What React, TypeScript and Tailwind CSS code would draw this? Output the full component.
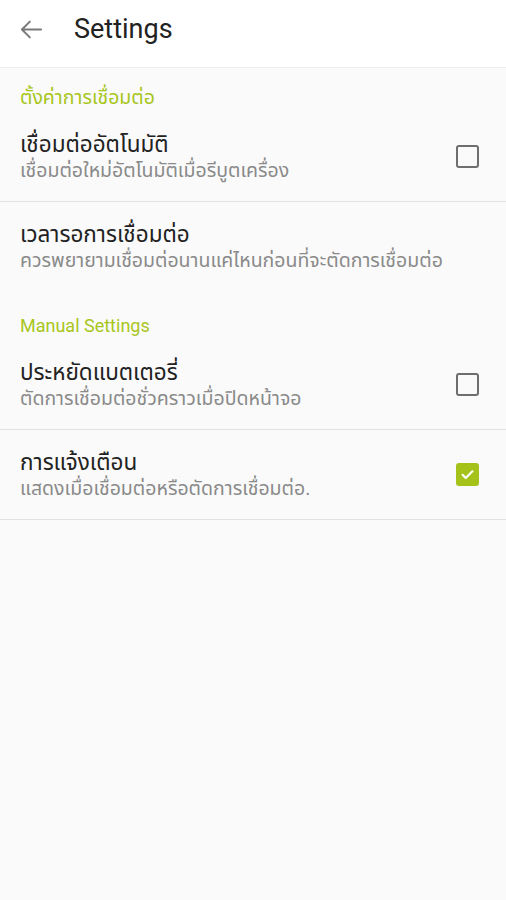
const GREEN = "text-[#a8c61c]";

type Item = {
  title: string;
  subtitle: string;
  checkbox?: boolean;
  checked?: boolean;
  divider?: boolean;
};

function Checkbox({ checked }: { checked: boolean }) {
  if (checked) {
    return (
      <div className="flex h-[23px] w-[23px] items-center justify-center rounded-[3px] bg-[#a4c21a]">
        <svg width="17" height="17" viewBox="0 0 24 24" fill="none" stroke="white" strokeWidth="3" strokeLinecap="round" strokeLinejoin="round">
          <path d="M5 12.5l4.5 4.5L19 7.5" />
        </svg>
      </div>
    );
  }
  return <div className="h-[23px] w-[23px] rounded-[3px] border-[2.5px] border-[#6e6e6e]" />;
}

function SettingRow({ item }: { item: Item }) {
  return (
    <div className={`flex h-[90px] px-5 ${item.divider ? "border-b border-[#e2e2e2]" : ""}`}>
      <div className="flex-1 pt-[18px]">
        <div className="text-[22.5px] leading-[28px] text-[#222]">{item.title}</div>
        <div className="text-[19.5px] leading-[25px] text-[#8a8a8a]">{item.subtitle}</div>
      </div>
      {item.checkbox && (
        <div className="mr-[7px] self-center">
          <Checkbox checked={!!item.checked} />
        </div>
      )}
    </div>
  );
}

export default function App() {
  const first: Item[] = [
    { title: "เชื่อมต่ออัตโนมัติ", subtitle: "เชื่อมต่อใหม่อัตโนมัติเมื่อรีบูตเครื่อง", checkbox: true, divider: true },
    { title: "เวลารอการเชื่อมต่อ", subtitle: "ควรพยายามเชื่อมต่อนานแค่ไหนก่อนที่จะตัดการเชื่อมต่อ" },
  ];
  const second: Item[] = [
    { title: "ประหยัดแบตเตอรี่", subtitle: "ตัดการเชื่อมต่อชั่วคราวเมื่อปิดหน้าจอ", checkbox: true, divider: true },
    { title: "การแจ้งเตือน", subtitle: "แสดงเมื่อเชื่อมต่อหรือตัดการเชื่อมต่อ.", checkbox: true, checked: true, divider: true },
  ];

  return (
    <div className="min-h-[900px] w-[506px] bg-[#fafafa] font-['Roboto','Noto_Sans','Noto_Sans_Thai',sans-serif]">
      {/* Toolbar */}
      <div className="flex h-[68px] items-start border-b border-[#ececec] bg-white pt-[13px]">
        <div className="ml-[18px] flex h-[32px] w-[28px] items-center">
          <svg width="27" height="27" viewBox="0 0 24 24" fill="none" stroke="#7a7a7a" strokeWidth="1.8" strokeLinecap="round" strokeLinejoin="round">
            <path d="M20.5 12H3.5M10.5 5l-7 7 7 7" />
          </svg>
        </div>
        <div className="ml-[28px] text-[27px] leading-[32px] text-[#222]">Settings</div>
      </div>

      {/* Section 1 */}
      <div className={`px-5 pt-[18px] pb-[2px] text-[19.5px] leading-[24px] ${GREEN}`}>ตั้งค่าการเชื่อมต่อ</div>
      {first.map((it) => (
        <SettingRow key={it.title} item={it} />
      ))}

      {/* Section 2 */}
      <div className={`px-5 pt-[22px] pb-[2px] text-[18px] leading-[24px] ${GREEN}`}>Manual Settings</div>
      {second.map((it) => (
        <SettingRow key={it.title} item={it} />
      ))}
    </div>
  );
}
